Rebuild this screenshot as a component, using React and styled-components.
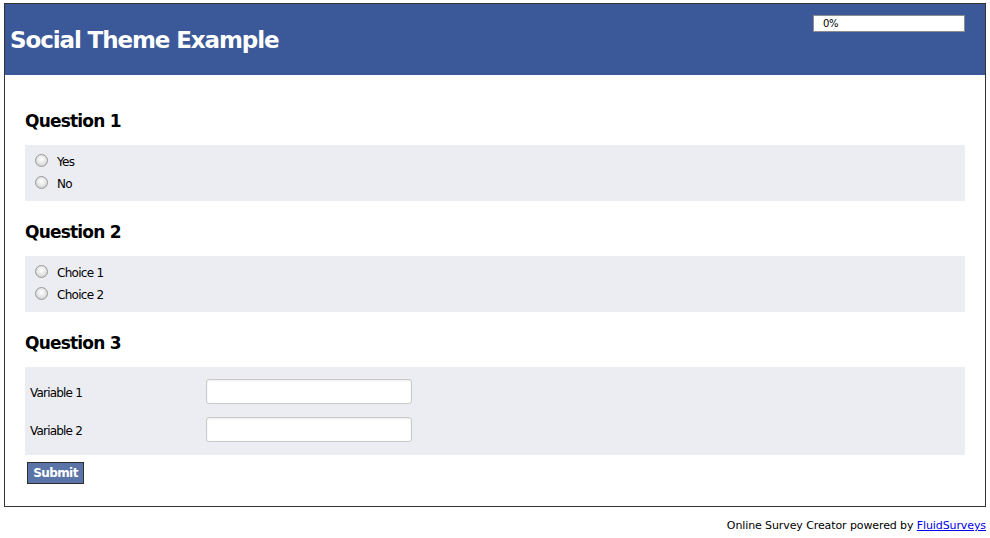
import React from "react";
import styled, { createGlobalStyle } from "styled-components";

const Global = createGlobalStyle`
  html, body { margin: 0; padding: 0; background: #fff; }
  body { font-family: "DejaVu Sans", Verdana, sans-serif; color: #111; }
`;

const Frame = styled.div`
  box-sizing: border-box;
  width: 982px;
  margin: 3px 0 0 4px;
  border: 1px solid #333;
  background: #fff;
`;

const Header = styled.header`
  display: flex;
  justify-content: space-between;
  align-items: flex-start;
  height: 71px;
  padding: 0 20px 0 5px;
  background: #3b5998;
`;

const Title = styled.h1`
  align-self: center;
  margin: 0;
  color: #fff;
  font-size: 23px;
  font-weight: bold;
  letter-spacing: -1.1px;
  line-height: 28px;
`;

const Progress = styled.div`
  box-sizing: border-box;
  width: 152px;
  height: 17px;
  margin-top: 11px;
  padding-left: 9px;
  border: 1px solid #8c8c8c;
  background: #fff;
  color: #000;
  font-size: 10px;
  line-height: 15px;
  letter-spacing: -0.3px;
`;

const Content = styled.main`
  padding: 15px 20px 22px;
`;

const Heading = styled.h2`
  margin: 20px 0 13px;
  font-size: 17px;
  font-weight: bold;
  line-height: 22px;
  letter-spacing: -0.8px;
  color: #000;
`;

const Panel = styled.div`
  background: #ecedf2;
  padding: ${(p) => p.$pad};
`;

const OptionRow = styled.label`
  display: flex;
  align-items: center;
  height: 22px;
  font-size: 12px;
  letter-spacing: -0.7px;
  color: #000;
`;

const OptionText = styled.span`
  padding-top: 3px;
`;

const Radio = styled.input.attrs({ type: "radio" })`
  appearance: none;
  box-sizing: border-box;
  width: 13px;
  height: 13px;
  margin: 0 9px 0 0;
  border: 1px solid #999;
  border-radius: 50%;
  background: radial-gradient(circle at 50% 40%, #ffffff 0, #eeeeee 35%, #d0d0d0 80%, #bcbcbc 100%);
`;

const FieldGrid = styled.div`
  display: grid;
  grid-template-columns: 176px 206px;
  row-gap: 13px;
  align-items: center;
`;

const FieldLabel = styled.label`
  padding-top: 2px;
  font-size: 12px;
  letter-spacing: -0.8px;
  color: #000;
`;

const TextInput = styled.input.attrs({ type: "text" })`
  box-sizing: border-box;
  width: 206px;
  height: 25px;
  margin: 0;
  border: 1px solid #c9c9c9;
  border-radius: 3px;
  background: #fff;
  box-shadow: inset 0 1px 2px rgba(0, 0, 0, 0.08);
  outline: none;
`;

const SubmitButton = styled.button`
  display: block;
  box-sizing: border-box;
  width: 57px;
  height: 22px;
  margin: 7px 0 0 2px;
  padding: 0;
  border: 1px solid #2e2e2e;
  background: #5b74a8;
  color: #fff;
  font-family: "DejaVu Sans", Verdana, sans-serif;
  font-size: 12px;
  font-weight: bold;
  letter-spacing: -0.6px;
  line-height: 20px;
`;

const Footer = styled.footer`
  margin-top: 11px;
  padding-right: 4px;
  text-align: right;
  font-size: 11px;
  line-height: 16px;
  letter-spacing: -0.1px;
  color: #000;

  a {
    color: #0000ee;
    text-decoration: underline;
  }
`;

const questions = [
  { title: "Question 1", name: "q1", options: ["Yes", "No"] },
  { title: "Question 2", name: "q2", options: ["Choice 1", "Choice 2"] },
];

export default function App() {
  return (
    <>
      <Global />
      <Frame>
        <Header>
          <Title>Social Theme Example</Title>
          <Progress>0%</Progress>
        </Header>
        <Content>
          {questions.map((q) => (
            <section key={q.name}>
              <Heading>{q.title}</Heading>
              <Panel $pad="4px 10px 8px">
                {q.options.map((o) => (
                  <OptionRow key={o}>
                    <Radio name={q.name} />
                    <OptionText>{o}</OptionText>
                  </OptionRow>
                ))}
              </Panel>
            </section>
          ))}
          <section>
            <Heading>Question 3</Heading>
            <Panel $pad="12px 5px 13px">
              <FieldGrid>
                <FieldLabel>Variable 1</FieldLabel>
                <TextInput />
                <FieldLabel>Variable 2</FieldLabel>
                <TextInput />
              </FieldGrid>
            </Panel>
          </section>
          <SubmitButton>Submit</SubmitButton>
        </Content>
      </Frame>
      <Footer>
        Online Survey Creator powered by <a href="#">FluidSurveys</a>
      </Footer>
    </>
  );
}
